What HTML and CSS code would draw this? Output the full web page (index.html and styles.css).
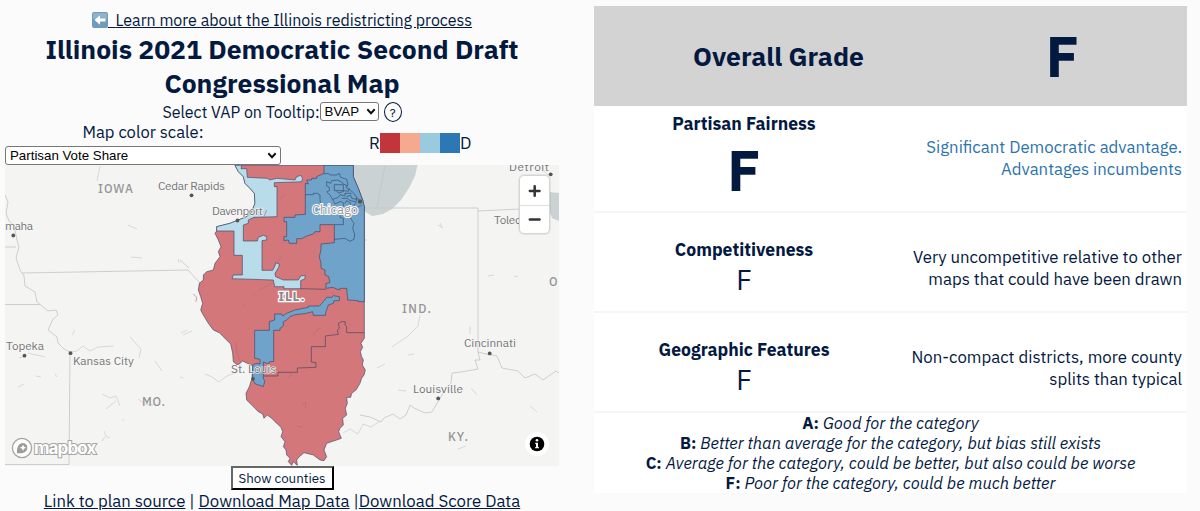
FILE: index.html
```html
<!DOCTYPE html>
<html lang="en">
<head>
<meta charset="utf-8" />
<title>Illinois 2021 Democratic Second Draft Congressional Map</title>
<link rel="stylesheet" href="styles.css">
</head>

<body>
<div class="report">
	<div class="plan">
		<a href="#" class="back"><svg class="arrow" viewBox="0 0 16 16"><rect width="16" height="16" rx="2" fill="#6f9cba"/><rect x="1" y="1" width="14" height="6" rx="1" fill="#8db2c9"/><path d="M2.500 8 8 3.200V6.500h5.500v3H8v3.300z" fill="#fff"/></svg>&nbsp; <span class="back_text">Learn more about the Illinois redistricting process</span></a>
		<h1>Illinois 2021 Democratic Second Draft<br>Congressional Map</h1>
		<div class="vap">
			<label for="vap">Select VAP on Tooltip:</label>
			<div class="sel sel_vap">
				<select id="vap"><option>BVAP</option></select>
				<svg class="chev" viewBox="0 0 10 7"><path d="M1.300 1.300 5 5.200 8.700 1.300"/></svg>
			</div>
			<span class="help">?</span>
		</div>
		<div class="scale">
			<div class="scale_l">
				<label for="scale">Map color scale:</label>
				<div class="sel sel_scale">
					<select id="scale"><option>Partisan Vote Share</option></select>
					<svg class="chev" viewBox="0 0 10 7"><path d="M1.300 1.300 5 5.200 8.700 1.300"/></svg>
				</div>
			</div>
			<div class="legend">R<i class="r2"></i><i class="r1"></i><i class="d1"></i><i class="d2"></i>D</div>
		</div>
		<div class="map">
			<svg class="canvas" viewBox="5 165 554 301">
				<!-- water -->
				<path class="lake" d="M352 165H417.500L415 176 409 188 401 200 392 209 383 214 372 216 364 211 358 195 352 180z"/>
				<path class="lake" d="M549 192 559 193V221L552 218 548 208z"/>
				<!-- state borders -->
				<path class="border" d="M5 195 8 202 6 213 9 221 14 225 17 240 19 247 16 258 20 270 24 276 25 286 35 292 37 302 42 306 48 311 56 310 58 315 53 319 48 330 57 337 58 343 64 349 70 352M5 247H16M22 273 188 270 200 283M5 304.500H40M70 353 69 464.500H5M364 208H478V352M478 211 520 209M478 352 480 360 475 360 478 369 461 372 452 373 451 383 443 393 432 412 425 413 414 408 410 405 406 415 400 419 393 414 384 418 381 422 370 417 360 415M478 352 486 354 497 356 502 368 518 371 525 378 535 374 543 380 556 371 559 373M364 240H367M385 166 377 207M180 260 189 268"/>
				<path class="river" d="M71 352 77 351 83 346 90 351 98 347 114 346M130 337 141 349 139 358M155 361 162 371M180 377 183 378M205 374 212 377 219 382M128 225 137 229M131 257 142 258M100 166 97 181M178 259 179 263M72 335 75 330M181 333 187 330M183 335 192 331M102 394 110 398 116 396 120 406M106 409 116 401M122 419 124 421M104 431 106 436 110 438M102 441 105 437M138 399 145 404 154 405M25 356 19 358M36 376 41 377M18 387 24 384M55 374 57 377M420 315 418 326 408 336 392 347M470 326 470 334M408 355 414 354M398 390 406 391M377 368 385 364M440 223 442 227M488 276 494 275M514 277 518 276M438 225 443 228M343 433 350 429 358 434 363 424 371 427 380 421M458 449 466 446M471 388 477 395M530 406 537 412M540 166 548 175M28 353 45 357M219 382 227 376 238 372"/>
				<!-- districts, three units per pixel -->
				<g transform="translate(180 160) scale(.33333)">
					<path class="rep" d="M165 16H520V50L535 85 548 120 553 140V535L543 550 548 562 541 575 545 590 550 600 547 615 556 630 552 645 545 655 540 670 528 690 515 700 512 712H500L502 730 496 745 500 765 488 775 490 795 480 805 476 815 484 835 470 840 440 850 432 870 440 890 432 902 420 900 400 885 372 878 358 890 350 900 352 916 345 910 340 905 335 916 325 905 330 895 320 885 318 870 310 860 315 845 303 830 308 815 303 802 285 785 275 775 262 765 252 775 248 762 235 755 215 735 200 720 198 700 208 680 216 655 218 617 200 609 188 603 178 612 170 614 160 605 158 580 152 552 130 530 118 518 100 510 85 490 70 465 62 450 68 430 62 410 55 390 58 370 70 360V345L80 335 100 330 105 310 120 290 115 275 123 260 115 240 105 220 110 213V200L150 190 175 180 200 170 215 155 225 130 223 100 210 85 195 70 190 50 175 35z"/>
					<path class="lean" d="M165 16H185L183 26H200L202 52 262 55 270 60 290 55 345 60 350 50 362 46 368 55 365 65 345 66 283 68V80H291V170L222 172 205 180 205 190 190 195V243H232L235 232 250 226 260 230V240L246 242V331H278L285 318 287 308 298 312 296 322 285 340 287 350 310 360H355L362 348 375 346V356L362 362V386H312V380H284L280 360 156 356 160 345H187V286H162V213H110V200L150 190 175 180 200 170 215 155 225 130 223 100 210 85 195 70 190 50 175 35z"/>
					<path class="dem" d="M432 16H520V50L535 85 548 120 553 140V425H535V422L503 420 500 385H480L478 390 458 382 438 385V370L450 368 446 350 435 345V330L423 325V310L418 290 423 270V252L463 248V194H420V215H405L400 222 380 228 365 236H350V250H328L325 240 312 242V230H320V185H312V172H345V165L376 163V70L385 72 380 60H395V55H410V50L432 40z"/>
					<path class="dem" d="M284 480V462H305L308 468 320 460 345 450 385 442V438H418L430 425 440 412H455L460 407 478 410V422H462L460 430 445 435 438 455 436 466H400L398 455 375 461 345 464 330 470 320 480 310 485V498L300 505V511H281V605H268L266 612 250 606V657L255 662 250 680 240 676 226 672 218 658V615L228 610 240 612V598L224 595V511H268V485z"/>
					<path class="line" d="M362 386 438 388M250 648H294V637H352V624L408 622V608L394 606V560H436V528L475 523 472 510 478 505 475 490 485 485H496L495 495 500 500V518H553"/>
					<!-- Chicago area -->
					<path class="line" d="M432 42 445 40 450 45H470L478 40 482 52 500 58 504 75 498 82 510 90 520 98 530 112 538 120M440 65 452 70 455 62 472 60 485 66 490 72 503 78M440 65V78L448 82V92L440 96 450 105 458 118 475 112 480 104 495 108V100L515 100M463 74H490V92H463zM376 104H400V100H412L420 105V118L424 150M458 118 465 132 482 124 492 130 488 142 505 148 510 140 522 144M470 95 478 99 495 92 505 94 508 84M500 110 512 106 515 115 532 118M485 115H502L510 122 526 125M530 112 528 128 522 135 526 148 515 160 512 175 522 190 518 205 524 222 522 238 510 244 495 235 463 238M463 194H490V175L480 172V158M495 130 500 122 512 130 510 140M545 136 532 142 530 150"/>
					<path class="hint" d="M220 405 225 400M190 440 200 430M238 390 275 370M280 320 310 285M300 118 318 100M250 175 260 150M40 402 50 412 48 425M400 525 410 510 422 505M325 655 340 635M366 735 378 728 376 745M350 798 368 802M166 545 170 570 180 605M456 398 459 405"/>
				</g>
				<!-- labels -->
				<g class="city">
					<text x="158" y="190" textLength="67">Cedar Rapids</text>
					<text x="212" y="215" textLength="51">Davenport</text>
					<text x="5" y="230" textLength="28">maha</text>
					<text x="6" y="350" textLength="38">Topeka</text>
					<text x="73" y="365" textLength="61">Kansas City</text>
					<text x="231" y="373" textLength="45">St. Louis</text>
					<text x="312" y="213.500" textLength="46" class="big">Chicago</text>
					<text x="464" y="347" textLength="52">Cincinnati</text>
					<text x="413" y="393" textLength="50">Louisville</text>
					<text x="494" y="223.500" textLength="34">Toledo</text>
					<text x="509" y="171" textLength="40">Detroit</text>
				</g>
				<g class="dots">
					<circle cx="191.500" cy="195.300" r="1.900"/><circle cx="237.500" cy="220.500" r="1.900"/><circle cx="13.300" cy="235.500" r="1.900"/>
					<circle cx="24.500" cy="355.700" r="1.900"/><circle cx="70.500" cy="353.200" r="1.900"/><circle cx="253" cy="378.800" r="1.900"/>
					<circle cx="360" cy="201.500" r="2.200"/><circle cx="489.700" cy="353.400" r="1.900"/><circle cx="438.200" cy="398.400" r="1.900"/><circle cx="550.700" cy="174.300" r="1.900"/>
				</g>
				<g class="state">
					<text x="98" y="193" textLength="35">IOWA</text>
					<text x="142" y="406" textLength="23">MO.</text>
					<text x="402" y="313" textLength="29">IND.</text>
					<text x="448" y="441" textLength="20">KY.</text>
					<text x="549" y="285.500">O</text>
					<text x="278.500" y="300.500" textLength="26" class="ill">ILL.</text>
				</g>
			</svg>
			<div class="zoom">
				<button aria-label="Zoom in"><svg viewBox="0 0 30 29"><path d="M10.200 14.500H20.200M15.200 9.500V19.500"/></svg></button>
				<button aria-label="Zoom out"><svg viewBox="0 0 30 29"><path d="M10.200 14H20.200"/></svg></button>
			</div>
			<div class="logo">
				<svg viewBox="0 0 22 22"><circle cx="11" cy="11" r="9.600" fill="#fff" stroke="#a5a5a5" stroke-width="1.300"/><path d="M6 16.200C5.500 10 8 6 12 6a4.700 4.700 0 0 1 4.300 4.800C16.300 15 12 17 6 16.200z" fill="#9c9c9c"/><path d="m12 7.500 1 2.200 2.200 1-2.200 1-1 2.200-1-2.200-2.200-1 2.200-1z" fill="#fff"/></svg>
				<span>mapbox</span>
			</div>
			<div class="info"><svg viewBox="0 0 24 24"><circle cx="12" cy="12" r="12" fill="#fff"/><circle cx="12" cy="12" r="7.300"/><circle cx="12" cy="8.300" r="1.300" fill="#fff"/><path d="M10.200 10.800H13V15h.8v1.200h-3.600V15H11v-3h-.8z" fill="#fff"/></svg></div>
		</div>
		<button class="counties">Show counties</button>
		<div class="links"><a href="#">Link to plan source</a> | <a href="#">Download Map Data</a> |<a href="#">Download Score Data</a></div>
	</div>

	<div class="card">
		<div class="overall">
			<h2>Overall Grade</h2>
			<b class="grade_big">F</b>
		</div>
		<div class="row row_first">
			<div class="score"><h3>Partisan Fairness</h3><b class="grade_big">F</b></div>
			<p class="blue">Significant Democratic advantage.<br>Advantages incumbents</p>
		</div>
		<div class="row">
			<div class="score"><h3>Competitiveness</h3><span class="grade">F</span></div>
			<p>Very uncompetitive relative to other<br>maps that could have been drawn</p>
		</div>
		<div class="row">
			<div class="score"><h3>Geographic Features</h3><span class="grade">F</span></div>
			<p>Non-compact districts, more county<br>splits than typical</p>
		</div>
		<ul class="key">
			<li><b>A:</b> <em>Good for the category</em></li>
			<li><b>B:</b> <em>Better than average for the category, but bias still exists</em></li>
			<li><b>C:</b> <em>Average for the category, could be better, but also could be worse</em></li>
			<li><b>F:</b> <em>Poor for the category, could be much better</em></li>
		</ul>
	</div>
</div>
</body>
</html>
```
FILE: styles.css
```css
*{ padding:0; margin:0; box-sizing:border-box;}
body{ background:#fbfbfb; color:#03193f; font:16px/20px "IBM Plex Sans",Roboto,sans-serif; overflow:hidden;}
a{ color:inherit;}
.report{ display:flex; gap:35px; padding:6px 13px 0 5px; height:511px;}
.plan{ width:554px; display:flex; flex-direction:column; align-items:center; padding-top:3px;}
.plan > *{ flex:none;}
.back{ height:22px; line-height:22px; white-space:nowrap;}
.arrow{ width:16px; height:16px; vertical-align:-2px;}
h1{ font-size:26.5px; line-height:34px; text-align:center; white-space:nowrap; margin-top:1px;}
.vap{ display:flex; align-items:center; height:23px;}
.vap label{ line-height:22px;}
.sel{ position:relative;}
.sel select{ display:block; width:100%; height:19px; appearance:none; border:1px solid #777; border-radius:3px; background:#fff; color:#000; font:13.3px/17px "Liberation Sans",sans-serif; padding-left:4px;}
.chev{ position:absolute; right:3px; top:6px; width:10px; height:7px; fill:none; stroke:#111; stroke-width:2;}
.sel_vap{ width:59px;}
.help{ width:18px; height:20px; border:1px solid #03193f; border-radius:50%; text-align:center; font-size:12px; line-height:19px; margin-left:5px;}
.scale{ display:flex; width:100%; height:42px;}
.scale_l{ width:276px; text-align:center;}
.scale_l label{ display:block; height:23px; line-height:19px; font-size:16.6px;}
.sel_scale{ width:276px;}
.sel_scale .chev{ right:4px;}
.legend{ display:flex; align-items:center; height:20px; margin:10px 0 0 88px; font-size:17px;}
.legend i{ width:20px; height:20px;}
.r2{ background:#c2353b;}
.r1{ background:#f5a98f;}
.d1{ background:#99cae0;}
.d2{ background:#2b78b5;}

.map{ position:relative; width:554px; height:301px; background:#f4f4f3; overflow:hidden;}
.canvas{ display:block; width:554px; height:301px;}
.lake{ fill:#cad2d3;}
.border, .river{ fill:none; stroke:#c3c5c5; stroke-width:.8;}
.river{ stroke:#ced2d2;}
.rep, .lean, .dem{ stroke:#33405f; stroke-width:1.8;}
.rep{ fill:#d3777b;}
.lean{ fill:#b8dcea;}
.dem{ fill:#6fa3ca;}
.line{ fill:none; stroke:#33405f; stroke-width:1.8;}
.hint{ fill:none; stroke:#b76b73; stroke-width:2;}
.city{ font-size:11.8px; fill:#777; stroke:#f6f6f6; stroke-width:1.2; paint-order:stroke;}
.city .big{ font-size:13px; fill:#999; stroke:#fff; stroke-width:2;}
.dots{ fill:#555;}
.state{ font-size:12px; font-weight:500; fill:#969696;}
.state .ill{ font-size:13px; font-weight:700; fill:#888; stroke:#fff; stroke-width:2.400; paint-order:stroke;}
.zoom{ position:absolute; right:9px; top:10px; width:31px; height:59px; border:1px solid #d5d5d5; border-radius:5px; background:#fff; box-shadow:0 0 0 1px rgba(0,0,0,.06);}
.zoom button{ display:block; width:29px; height:29px; border:0; background:none;}
.zoom button + button{ border-top:1px solid #ddd;}
.zoom svg{ display:block; width:29px; height:28px; stroke:#333; stroke-width:2.600; stroke-linecap:round;}
.logo{ position:absolute; left:6px; bottom:7px; display:flex; align-items:center; gap:1px;}
.logo svg{ width:22px; height:22px;}
.logo span{ font:700 17px/20px Inter,sans-serif; letter-spacing:-.9px; color:#fff; -webkit-text-stroke:2px #a5a5a5; paint-order:stroke;}
.info{ position:absolute; right:10px; bottom:10px; width:24px; height:24px;}
.info svg{ display:block;}
.counties{ width:103px; height:24px; border:2px outset #444; border-color:#666 #222 #222 #666; background:#fff; color:inherit; font:13.333px "IBM Plex Sans",Roboto,sans-serif; white-space:nowrap;}
.links{ line-height:22px; font-size:16.8px; white-space:nowrap;}

.card{ width:593px;}
.overall{ display:flex; align-items:center; height:100px; background:#d3d3d3; padding-right:25px;}
.overall h2{ width:369px; text-align:center; font-size:26.5px; line-height:34px;}
.overall .grade_big{ flex:1; text-align:center;}
.grade_big{ font-size:57px; line-height:60px;}
.row{ display:flex; align-items:center; height:100px; background:#fff; border-bottom:2px solid #f5f5f5; padding-top:14px;}
.row_first{ height:107px; padding-top:0;}
.score{ width:300px; text-align:center;}
.score > *{ display:block;}
h3{ font-size:17.6px; line-height:22px;}
.row_first h3{ margin:-5px 0 5px;}
.row p{ flex:1; text-align:right; padding:0 5px 2px 0; line-height:22px; font-size:16.8px; white-space:nowrap;}
.row .blue{ color:#2c74ad; padding-bottom:1px;}
.grade{ font-size:28px; line-height:38px;}
.key{ height:80px; background:#fff; list-style:none; text-align:center; font-size:16.45px; white-space:nowrap;}
```
